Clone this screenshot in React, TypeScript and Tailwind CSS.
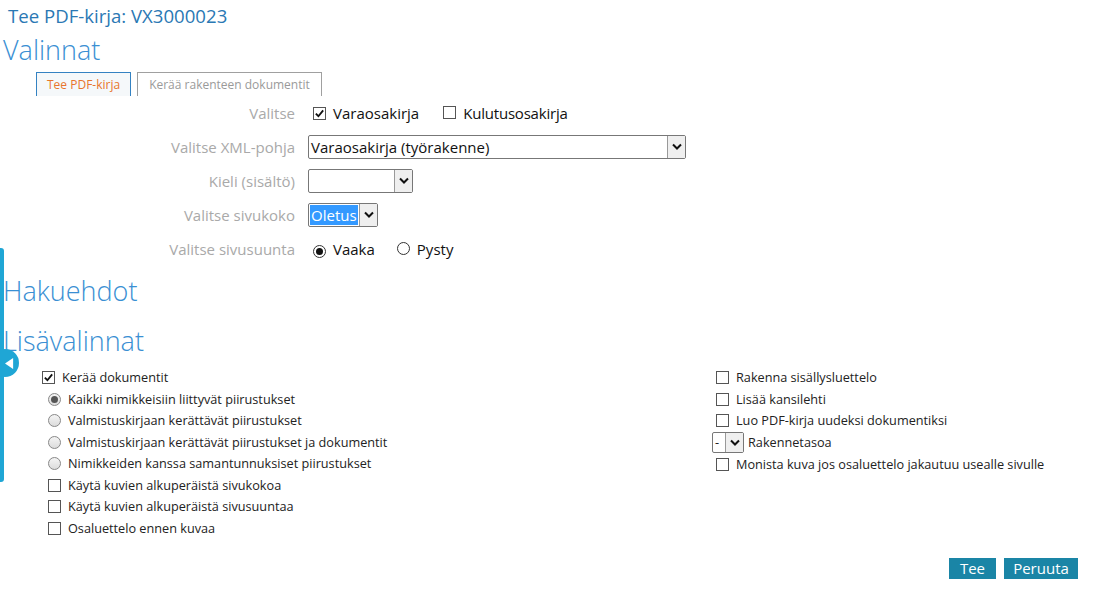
import React from 'react'

const font = "font-['Open_Sans','Noto_Sans',sans-serif]"

function Check({ on }: { on?: boolean }) {
  return (
    <span className="inline-flex w-[13px] h-[13px] border border-[#555] bg-white items-center justify-center shrink-0">
      {on && (
        <svg viewBox="0 0 12 12" className="w-[11px] h-[11px]">
          <path d="M2 6.2 L4.8 9 L10 2.6" fill="none" stroke="#111" strokeWidth="2" />
        </svg>
      )}
    </span>
  )
}

function Radio({ on, dark }: { on?: boolean; dark?: boolean }) {
  return (
    <span
      className={
        'inline-flex w-[13px] h-[13px] rounded-full border items-center justify-center shrink-0 ' +
        (dark ? 'border-[#333] bg-white' : 'border-[#888] bg-gradient-to-b from-[#f4f4f4] to-[#dcdcdc]')
      }
    >
      {on && <span className={'w-[7px] h-[7px] rounded-full ' + (dark ? 'bg-[#111]' : 'bg-[#555]')} />}
    </span>
  )
}

function Arrow() {
  return (
    <span className="flex w-[18px] h-full items-center justify-center bg-[#efefef] border-l border-[#999]">
      <svg viewBox="0 0 10 8" className="w-[10px] h-[8px]">
        <path d="M1 1.5 L5 5.5 L9 1.5" fill="none" stroke="#111" strokeWidth="2" />
      </svg>
    </span>
  )
}

function Row({ label, children }: { label: string; children: React.ReactNode }) {
  return (
    <div className="flex items-center h-[34px]">
      <div className="w-[296px] text-right text-[15px] text-[#a9a9a9] pr-[1px]">{label}</div>
      <div className="flex items-center pl-[12px] text-[15px] text-[#111]">{children}</div>
    </div>
  )
}

function Opt({ children, kind, on }: { children: React.ReactNode; kind: 'c' | 'r'; on?: boolean }) {
  return (
    <div className="flex items-center h-[21.5px] gap-[7px]">
      {kind === 'c' ? <Check on={on} /> : <Radio on={on} />}
      <span>{children}</span>
    </div>
  )
}

export default function App() {
  return (
    <div className={`relative w-[1096px] h-[594px] bg-white overflow-hidden ${font}`}>
      <div className="absolute left-0 top-[248px] w-[4px] h-[234px] bg-[#1fa6d5] rounded-r-[3px]" />
      <div className="absolute left-[-9px] top-[349px] w-[28px] h-[28px] rounded-full bg-[#1fa6d5] flex items-center justify-center">
        <svg viewBox="0 0 10 12" className="w-[9px] h-[11px] ml-[8px]">
          <path d="M9 0 L0 6 L9 12 Z" fill="#fff" />
        </svg>
      </div>

      <div className="pl-[8px] pt-[3px] h-[30px] text-[18.6px] text-[#2a78b4] leading-[26px]">Tee PDF-kirja: VX3000023</div>
      <div className="pl-[3px] h-[42px] text-[27px] font-light text-[#3a8fd3] leading-[40px]">Valinnat</div>

      <div className="flex gap-[6px] pl-[36px] h-[24px]">
        <div className="px-[10px] border border-b-0 border-[#3482c2] bg-[#f5f8fa] text-[12px] text-[#e8752c] leading-[23px]">Tee PDF-kirja</div>
        <div className="px-[11px] border border-b-0 border-[#a0a0a0] bg-white text-[12px] text-[#9a9a9a] leading-[23px]">Kerää rakenteen dokumentit</div>
      </div>

      <Row label="Valitse">
        <span className="ml-[5px]"><Check on /></span>
        <span className="ml-[7px]">Varaosakirja</span>
        <span className="ml-[24px]"><Check /></span>
        <span className="ml-[7px] tracking-[-0.2px]">Kulutusosakirja</span>
      </Row>
      <Row label="Valitse XML-pohja">
        <div className="flex w-[378px] h-[24px] border border-[#777] rounded-[2px] bg-white">
          <span className="flex-1 pl-[2px] leading-[22px]">Varaosakirja (työrakenne)</span>
          <Arrow />
        </div>
      </Row>
      <Row label="Kieli (sisältö)">
        <div className="flex w-[105px] h-[24px] border border-[#777] rounded-[2px] bg-white">
          <span className="flex-1" />
          <Arrow />
        </div>
      </Row>
      <Row label="Valitse sivukoko">
        <div className="flex w-[70px] h-[24px] border border-[#777] rounded-[2px] bg-white">
          <span className="flex-1 m-[1px] bg-[#3399ff] text-white leading-[20px] pl-[1px]">Oletus</span>
          <Arrow />
        </div>
      </Row>
      <Row label="Valitse sivusuunta">
        <span className="ml-[5px]"><Radio on dark /></span>
        <span className="ml-[7px]">Vaaka</span>
        <span className="ml-[22px]"><Radio dark /></span>
        <span className="ml-[7px]">Pysty</span>
      </Row>

      <div className="pl-[3px] mt-[5px] h-[50px] text-[27px] font-light text-[#3a8fd3] leading-[40px]">Hakuehdot</div>
      <div className="pl-[3px] h-[40px] text-[27px] font-light text-[#3a8fd3] leading-[40px]">Lisävalinnat</div>

      <div className="flex mt-[6px] text-[12.7px] text-[#222]">
        <div className="w-[716px] pl-[42px]">
          <Opt kind="c" on>Kerää dokumentit</Opt>
          <div className="pl-[6px]">
            <Opt kind="r" on>Kaikki nimikkeisiin liittyvät piirustukset</Opt>
            <Opt kind="r">Valmistuskirjaan kerättävät piirustukset</Opt>
            <Opt kind="r">Valmistuskirjaan kerättävät piirustukset ja dokumentit</Opt>
            <Opt kind="r">Nimikkeiden kanssa samantunnuksiset piirustukset</Opt>
            <Opt kind="c">Käytä kuvien alkuperäistä sivukokoa</Opt>
            <Opt kind="c">Käytä kuvien alkuperäistä sivusuuntaa</Opt>
            <Opt kind="c">Osaluettelo ennen kuvaa</Opt>
          </div>
        </div>
        <div>
          <Opt kind="c">Rakenna sisällysluettelo</Opt>
          <Opt kind="c">Lisää kansilehti</Opt>
          <Opt kind="c">Luo PDF-kirja uudeksi dokumentiksi</Opt>
          <div className="flex items-center h-[22px] gap-[4px] ml-[-4px]">
            <div className="flex w-[32px] h-[21px] border border-[#777] rounded-[2px] bg-white">
              <span className="flex-1 pl-[2px] leading-[19px]">-</span>
              <Arrow />
            </div>
            <span>Rakennetasoa</span>
          </div>
          <Opt kind="c">Monista kuva jos osaluettelo jakautuu usealle sivulle</Opt>
        </div>
      </div>

      <div className="absolute right-[18px] bottom-[15px] flex gap-[8px]">
        <button className="h-[21px] w-[47px] bg-[#1a85a6] text-white text-[15px] leading-[21px]">Tee</button>
        <button className="h-[21px] w-[74px] bg-[#1a85a6] text-white text-[15px] leading-[21px]">Peruuta</button>
      </div>
    </div>
  )
}
